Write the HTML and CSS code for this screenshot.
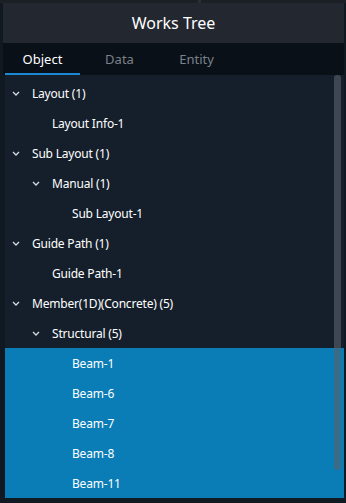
FILE: index.html
```html
<!DOCTYPE html>
<html>
<head>
<meta charset="utf-8">
<link rel="stylesheet" href="styles.css">
</head>
<body>
<div class="topbar"><div class="seg seg-a"></div><div class="seg seg-b"></div></div>
<div class="panel">
  <div class="header">Works Tree</div>
  <div class="tabs">
    <div class="tab active">Object</div>
    <div class="tab tab-data">Data</div>
    <div class="tab">Entity</div>
  </div>
  <div class="tree">
    <div class="row l0"><svg class="chev" viewBox="0 0 8 5" width="8" height="5"><polyline points="1,1 4,4 7,1"/></svg>Layout (1)</div>
    <div class="row l1 leaf">Layout Info-1</div>
    <div class="row l0"><svg class="chev" viewBox="0 0 8 5" width="8" height="5"><polyline points="1,1 4,4 7,1"/></svg>Sub Layout (1)</div>
    <div class="row l1"><svg class="chev" viewBox="0 0 8 5" width="8" height="5"><polyline points="1,1 4,4 7,1"/></svg>Manual (1)</div>
    <div class="row l2 leaf">Sub Layout-1</div>
    <div class="row l0"><svg class="chev" viewBox="0 0 8 5" width="8" height="5"><polyline points="1,1 4,4 7,1"/></svg>Guide Path (1)</div>
    <div class="row l1 leaf">Guide Path-1</div>
    <div class="row l0"><svg class="chev" viewBox="0 0 8 5" width="8" height="5"><polyline points="1,1 4,4 7,1"/></svg>Member(1D)(Concrete) (5)</div>
    <div class="row l1"><svg class="chev" viewBox="0 0 8 5" width="8" height="5"><polyline points="1,1 4,4 7,1"/></svg>Structural (5)</div>
    <div class="row l2 leaf sel">Beam-1</div>
    <div class="row l2 leaf sel">Beam-6</div>
    <div class="row l2 leaf sel">Beam-7</div>
    <div class="row l2 leaf sel">Beam-8</div>
    <div class="row l2 leaf sel">Beam-11</div>
    <div class="scrollbar"></div>
  </div>
</div>
</body>
</html>
```
FILE: styles.css
```css
html, body {
  margin: 0;
  padding: 0;
  background: #101821;
  width: 346px;
  height: 503px;
  overflow: hidden;
  font-family: "Noto Sans", "DejaVu Sans", sans-serif;
}
.topbar {
  height: 3px;
  display: flex;
  background: #1b1f26;
}
.seg-a { width: 198px; }
.seg-b { width: 3px; background: #2a2e35; }
.panel {
  margin-left: 3px;
  width: 341px;
  display: flex;
  flex-direction: column;
}
.header {
  height: 40px;
  background: #23272f;
  color: #ffffff;
  font-size: 16px;
  display: flex;
  align-items: center;
  justify-content: center;
  padding-bottom: 1px;
  box-sizing: border-box;
}
.tabs {
  height: 32px;
  background: #0a1018;
  display: flex;
  padding-left: 2px;
}
.tab {
  width: 75px;
  display: flex;
  align-items: center;
  justify-content: center;
  font-size: 13px;
  color: #7b8189;
  box-sizing: border-box;
}
.tab.tab-data { width: 79px; }
.tab.active {
  color: #ffffff;
  border-bottom: 2px solid #1d89d3;
  padding-top: 2px;
}
.tree {
  position: relative;
  background: #151f2c;
  margin-left: 2px;
  height: 422px;
  padding-top: 3px;
  box-sizing: border-box;
}
.row {
  height: 30px;
  display: flex;
  align-items: center;
  color: #ffffff;
  font-size: 12px;
  letter-spacing: -0.2px;
  white-space: nowrap;
}
.row.l0 { padding-left: 7px; }
.row.l1 { padding-left: 27px; }
.row.leaf { padding-left: 47px; }
.row.l2.leaf { padding-left: 67px; }
.row.sel { background: #0a7db6; }
.chev {
  flex: none;
  margin-right: 12px;
  margin-top: 1px;
  fill: none;
  stroke: #d7dbe0;
  stroke-width: 1.3;
}
.scrollbar {
  position: absolute;
  right: 3px;
  top: 0;
  width: 7px;
  height: 395px;
  border-radius: 3px;
  background: rgba(88, 96, 106, 0.6);
}
```
